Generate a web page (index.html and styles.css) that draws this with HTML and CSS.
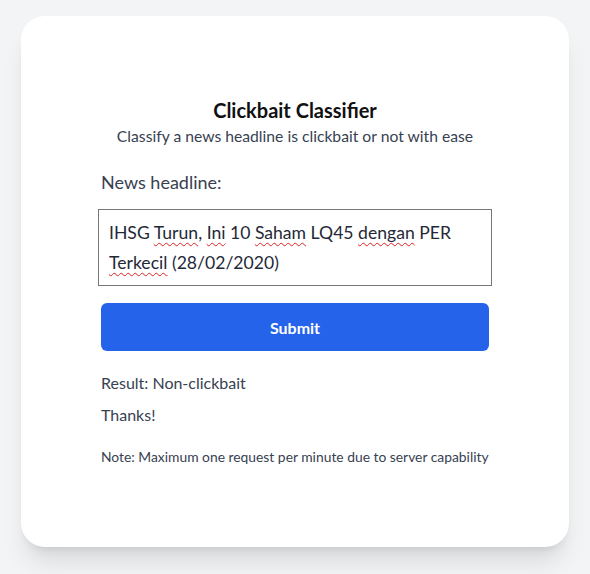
FILE: index.html
```html
<!DOCTYPE html>
<html lang="en">
<head>
<meta charset="utf-8">
<title>Clickbait Classifier</title>
<link rel="stylesheet" href="styles.css">
</head>
<body>
<main class="card">
  <div class="content">
    <h1 class="title">Clickbait Classifier</h1>
    <p class="subtitle">Classify a news headline is clickbait or not with ease</p>
    <label class="label">News headline:</label>
    <div class="headline" role="textbox">IHSG <span class="sp">Turun</span>, <span class="sp">Ini</span> 10 <span class="sp">Saham</span> LQ45 <span class="sp">dengan</span> PER <span class="sp">Terkecil</span> (28/02/2020)</div>
    <button class="submit" type="button">Submit</button>
    <p class="result">Result: Non-clickbait</p>
    <p class="thanks">Thanks!</p>
    <p class="note">Note: Maximum one request per minute due to server capability</p>
  </div>
</main>
</body>
</html>
```
FILE: styles.css
```css
* { box-sizing: border-box; }
html, body { margin: 0; padding: 0; }
body {
  background: #f3f4f6;
  font-family: Lato, "Open Sans", sans-serif;
  color: #374151;
  padding: 16px 0 27px;
}
.card {
  width: 548px;
  margin: 0 auto;
  background: #fff;
  border-radius: 24px;
  padding: 80px;
  box-shadow: 0 20px 25px -5px rgba(0,0,0,0.1), 0 8px 10px -6px rgba(0,0,0,0.1);
}
.content {
  display: flex;
  flex-direction: column;
}
.title {
  margin: 0;
  font-size: 20px;
  line-height: 28px;
  font-weight: 700;
  color: #111;
  text-align: center;
}
.subtitle {
  margin: 0;
  font-size: 15.7px;
  line-height: 24px;
  text-align: center;
  color: #374151;
}
.label {
  margin-top: 20px;
  font-size: 18px;
  line-height: 28px;
  color: #374151;
}
.headline {
  margin: 13px -3px 0;
  height: 77px;
  border: 1px solid #767676;
  padding: 8px 10px;
  font-size: 17.6px;
  line-height: 30px;
  color: #1f2937;
}
.sp {
  text-decoration: underline wavy #e02020;
  text-decoration-thickness: 1px;
  text-underline-offset: 3px;
}
.submit {
  margin-top: 17px;
  height: 48px;
  border: 0;
  border-radius: 6px;
  background: #2563eb;
  color: #fff;
  font-family: Lato, sans-serif;
  font-weight: 700;
  font-size: 16px;
}
.result {
  margin: 20px 0 0;
  font-size: 16px;
  line-height: 24px;
}
.thanks {
  margin: 8px 0 0;
  font-size: 16px;
  line-height: 24px;
}
.note {
  margin: 20px 0 0;
  font-size: 13.85px;
  line-height: 20px;
}
```
